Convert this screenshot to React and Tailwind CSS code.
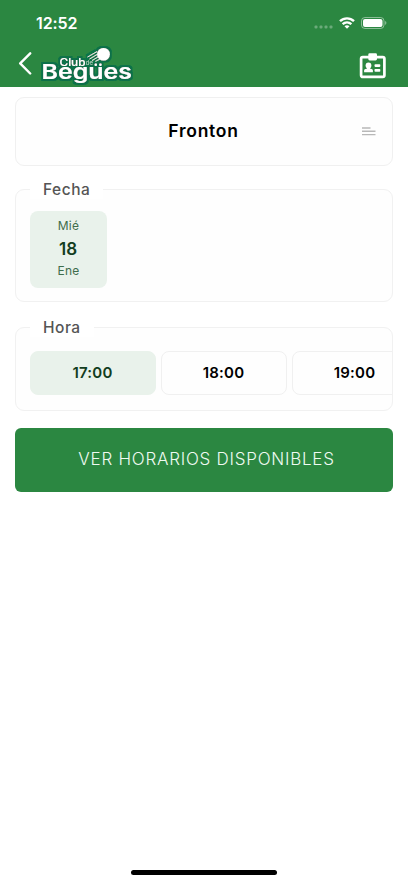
import React from "react";

function StatusBar() {
  return (
    <div className="flex h-11 items-start justify-between pl-[36px] pr-[21px] pt-[13px] text-white">
      <span className="text-[16px] font-semibold leading-[20px] tracking-[-0.1px]">12:52</span>
      <div className="flex h-[19px] items-center">
        <svg width="19" height="4" viewBox="0 0 19 4" className="mr-[6px] mt-[8px]" fill="#fff" fillOpacity=".3">
          <rect x="0.5" y="0.5" width="3" height="3" rx="1" />
          <rect x="5.5" y="0.5" width="3" height="3" rx="1" />
          <rect x="10.5" y="0.5" width="3" height="3" rx="1" />
          <rect x="15.5" y="0.5" width="3" height="3" rx="1" />
        </svg>
        <svg width="16" height="12" viewBox="0 0 16 12" className="mr-[6px]" fill="none" stroke="#fff" strokeWidth="2.4">
          <path d="M1 4.2C5 .4 11 .4 15 4.2" />
          <path d="M3.6 7.1C6.2 4.8 9.8 4.8 12.4 7.1" />
          <path d="M8 11.8 5.5 9.3C7 8 9 8 10.5 9.3Z" fill="#fff" stroke="none" />
        </svg>
        <svg width="26" height="12" viewBox="0 0 26 12">
          <rect x="0.5" y="0.5" width="22.5" height="11" rx="3.4" fill="none" stroke="#fff" strokeOpacity=".45" />
          <rect x="2" y="2" width="19.5" height="8" rx="2" fill="#fff" />
          <path d="M24.2 4.1v3.8c1.6-.7 1.6-3.1 0-3.8Z" fill="#fff" fillOpacity=".5" />
        </svg>
      </div>
    </div>
  );
}

function Logo() {
  return (
    <svg width="97" height="43" viewBox="0 0 97 43" fontFamily="Inter, sans-serif" fill="#fff">
      <defs>
        <filter id="outline" x="-5%" y="-10%" width="110%" height="120%">
          <feMorphology in="SourceAlpha" operator="dilate" radius="2" result="grown" />
          <feGaussianBlur in="grown" stdDeviation="0.5" result="soft" />
          <feFlood floodColor="#08704a" />
          <feComposite in2="soft" operator="in" result="edge" />
          <feMerge>
            <feMergeNode in="edge" />
            <feMergeNode in="SourceGraphic" />
          </feMerge>
        </filter>
      </defs>
      <g filter="url(#outline)">
        <path d="M48.6 13 58 7.6M50.6 15 58.2 10.4M53 16.6 59.2 12.8M56.4 17.4 61.4 14.8" stroke="#fff" strokeWidth=".8" />
        <circle cx="64.5" cy="10.3" r="6.3" />
        <text x="20.5" y="21.6" fontSize="10.4" fontWeight="500" textLength="26" lengthAdjust="spacingAndGlyphs">Club</text>
        <text x="46.8" y="21.4" fontSize="6" fill="#a9d1be" textLength="7" lengthAdjust="spacingAndGlyphs">de</text>
        <text x="2.5" y="34.8" fontSize="20.5" fontWeight="600" textLength="90.5" lengthAdjust="spacingAndGlyphs">Begues</text>
        <circle cx="56.8" cy="20.8" r="1.2" />
        <circle cx="61.4" cy="20.8" r="1.2" />
      </g>
    </svg>
  );
}

function CardIcon() {
  return (
    <svg width="28" height="26" viewBox="0 0 28 26" fill="#fff">
      <rect x="2.1" y="4.1" width="23.3" height="19.8" rx="1.6" fill="none" stroke="#fff" strokeWidth="2.7" />
      <rect x="9.3" y="0.3" width="8.7" height="7.2" rx="1.4" />
      <circle cx="9.5" cy="12.4" r="2.9" />
      <path d="M8 14h3v1.4l2.2.9q.7.4.7 1.3v1.6H5.1v-1.6q0-.9.7-1.3l2.2-.9Z" />
      <rect x="15.5" y="11.2" width="5.8" height="2.7" rx=".8" />
      <rect x="15.5" y="16" width="5.8" height="2.7" rx=".8" />
    </svg>
  );
}

function Header() {
  return (
    <header className="h-[87px] bg-[#2b8741]">
      <StatusBar />
      <div className="flex items-start pl-[18px] pr-[21px]">
        <svg width="15" height="24" viewBox="0 0 15 24" className="mr-[6px] mt-[7px]" fill="none" stroke="#fff" strokeWidth="2.4" strokeLinecap="round" strokeLinejoin="round">
          <path d="M12.2 2.3 2.2 12.4 12.2 22.5" />
        </svg>
        <Logo />
        <div className="ml-auto mt-[9px]">
          <CardIcon />
        </div>
      </div>
    </header>
  );
}

function Time({ label, selected }) {
  return (
    <button
      className={
        "flex h-[44px] w-[126px] shrink-0 items-center justify-center rounded-[8px] border pr-px text-[15px] font-semibold tracking-[0.2px] " +
        (selected ? "border-[#e9f2eb] bg-[#e9f2eb] text-[#123d20]" : "border-[#f0f0f0] bg-[#fefefe] text-black")
      }
    >
      {label}
    </button>
  );
}

function Section({ title, className, children }) {
  return (
    <fieldset className={"min-w-0 rounded-[9px] border border-[#f1f1f1] bg-[#fefefe] pl-[14px] " + className}>
      <legend className="h-5 bg-white px-[13px] pt-px text-[15.5px] font-medium leading-5 tracking-[0.5px] text-[#555]">{title}</legend>
      {children}
    </fieldset>
  );
}

export default function App() {
  return (
    <div className="flex h-[883px] w-[408px] flex-col overflow-hidden bg-white font-[Inter,sans-serif]">
      <Header />
      <main className="flex flex-col px-[15px] pt-[10px]">
        <div className="flex h-[69px] items-center rounded-[9px] border border-[#f0f0f0] bg-[#fefefe] pl-[30px] pr-[16px]">
          <span className="grow text-center text-[17.5px] font-semibold tracking-[0.75px] text-black">Fronton</span>
          <svg width="15" height="9" viewBox="0 0 15 9" stroke="#b8b8b8" strokeWidth="1.4">
            <path d="M1 1h8.5M1 4.3h13.5M1 7.6h13.5" />
          </svg>
        </div>

        <Section title="Fecha" className="mt-[13px] h-[123px]">
          <div className="mt-[12px] flex h-[77px] w-[77px] flex-col items-center rounded-[8px] bg-[#e9f2eb] pt-[6px] text-[#3f6d4b]">
            <span className="text-[12px] leading-[18px] tracking-[0.2px]">Mié</span>
            <span className="pr-px text-[17px] font-semibold leading-[29px] text-[#123d20]">18</span>
            <span className="text-[12px] leading-[14px] tracking-[0.3px]">Ene</span>
          </div>
        </Section>

        <Section title="Hora" className="mt-[15px] h-[94px]">
          <div className="mt-[14px] flex gap-[5px] overflow-hidden">
            <Time label="17:00" selected />
            <Time label="18:00" />
            <Time label="19:00" />
          </div>
        </Section>

        <button className="mt-[17px] flex h-[64px] items-center justify-center rounded-[6px] bg-[#2b8741] pl-[5px] text-[17px] font-light tracking-[0.75px] text-[#effaf1]">
          VER HORARIOS DISPONIBLES
        </button>
      </main>
      <div className="mb-[8px] mt-auto h-[5px] w-[146px] self-center rounded-full bg-black" />
    </div>
  );
}
